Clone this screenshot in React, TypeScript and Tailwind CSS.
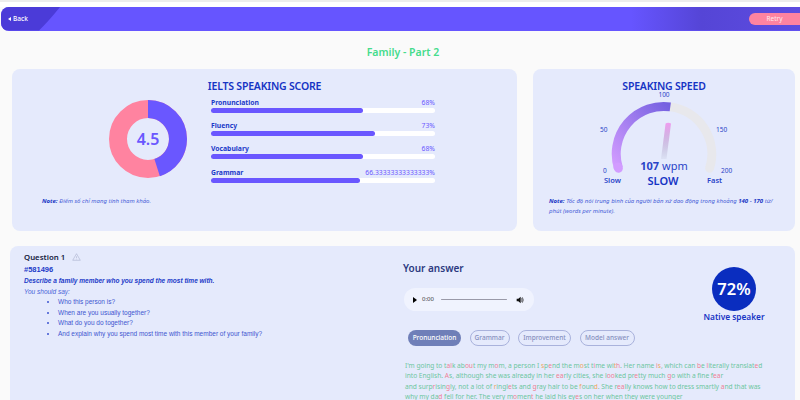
import { Fragment } from "react";

const scores = [
  { label: "Pronunciation", value: "68%", width: "w-[68%]" },
  { label: "Fluency", value: "73%", width: "w-[73%]" },
  { label: "Vocabulary", value: "68%", width: "w-[68%]" },
  { label: "Grammar", value: "66.33333333333333%", width: "w-[66.33%]" },
];

const tabs = [
  { label: "Grammar", width: "w-[40px]" },
  { label: "Improvement", width: "w-[53px]" },
  { label: "Model answer", width: "w-[55px]" },
];

const points = [
  "Who this person is?",
  "When are you usually together?",
  "What do you do together?",
  "And explain why you spend most time with this member of your family?",
];

// [x] = wrong sound, {x} = close sound
const answer = [
  "I'm going to t[al]k ab[ou]t my m[o]m, a person I {s}p[e]nd the m{o}st t[i]me wi{t}[h]. Her name [i]{s}, which can [b]e [l]iterally translat[e]d",
  "into English. [A]s, although she was already in her [ea]rly cities, she l[oo]ked pr[e]tty much [g]o with a fine f[ea]r",
  "and surp[r]isin[g]ly, not a lot of {r}ingl[e]ts and [g]ray hair to be {f}oun{d}. She r[ea]lly knows how to dress smartly [a]nd that was",
  "why my da[d] fell for her. The very m[o]men[t] he laid his ey[e]s on her when they were younger",
];

function Marked({ text }: { text: string }) {
  const parts = text.split(/(\[[^\]]+\]|\{[^}]+\})/);
  return (
    <>
      {parts.map((part, i) => {
        if (part.startsWith("["))
          return <span key={i} className="text-[#ee7f94]">{part.slice(1, -1)}</span>;
        if (part.startsWith("{"))
          return <span key={i} className="text-[#eda65c]">{part.slice(1, -1)}</span>;
        return <Fragment key={i}>{part}</Fragment>;
      })}
    </>
  );
}

function Donut() {
  return (
    <div className="relative ml-[67px] h-[78px] w-[78px]">
      <svg viewBox="0 0 78 78" className="h-full w-full">
        <circle cx="39" cy="39" r="30" fill="none" stroke="#ff83a0" strokeWidth="18" />
        <circle
          cx="39"
          cy="39"
          r="30"
          fill="none"
          stroke="#6a57ff"
          strokeWidth="18"
          strokeDasharray="84.8 188.5"
          transform="rotate(-90 39 39)"
        />
      </svg>
      <div className="absolute inset-0 flex items-center justify-center text-[16px] font-semibold text-[#6a57ff]">
        4.5
      </div>
    </div>
  );
}

function Gauge() {
  return (
    <div className="relative mx-auto h-[86px] w-[140px]">
      <svg viewBox="0 0 140 86" className="absolute inset-0 h-full w-full">
        <defs>
          <linearGradient id="speed" x1="0" y1="1" x2="1" y2="0">
            <stop offset="0" stopColor="#d29cff" />
            <stop offset="1" stopColor="#7460e0" />
          </linearGradient>
          <linearGradient id="needle" x1="0" y1="0" x2="0" y2="1">
            <stop offset="0" stopColor="#f09cf0" />
            <stop offset="1" stopColor="#8f8fb0" stopOpacity="0.1" />
          </linearGradient>
        </defs>
        <path
          d="M 76.3 5.9 A 47.5 47.5 0 0 1 115.6 67.2"
          fill="none"
          stroke="#e8e8ec"
          strokeWidth="9"
          strokeLinecap="round"
        />
        <path
          d="M 24.4 67.2 A 47.5 47.5 0 0 1 76.3 5.9"
          fill="none"
          stroke="url(#speed)"
          strokeWidth="9"
        />
        <path
          d="M 24.4 67.2 L 24 66"
          fill="none"
          stroke="#d29cff"
          strokeWidth="9"
          strokeLinecap="round"
        />
        <path
          d="M 71.6 22.5 Q 74 21 77 22.5 L 72.5 58 L 67 58 Z"
          fill="url(#needle)"
        />
      </svg>
      <span className="absolute left-[70px] top-[-11px] -translate-x-1/2 text-[6.5px] text-[#2a44c8]">100</span>
      <span className="absolute left-[6px] top-[24px] text-[6.5px] text-[#2a44c8]">50</span>
      <span className="absolute left-[122px] top-[24px] text-[6.5px] text-[#2a44c8]">150</span>
      <span className="absolute left-[9px] top-[65px] text-[6.5px] text-[#2a44c8]">0</span>
      <span className="absolute left-[127px] top-[65px] text-[6.5px] text-[#2a44c8]">200</span>
      <span className="absolute left-[10px] top-[74px] text-[7.5px] font-semibold text-[#2a44c8]">Slow</span>
      <span className="absolute left-[113px] top-[74px] text-[7.5px] font-semibold text-[#2a44c8]">Fast</span>
      <div className="absolute left-[70px] top-[57px] -translate-x-1/2 whitespace-nowrap text-[11px] leading-[16px] text-[#2a44c8]">
        <span className="font-bold">107</span> wpm
      </div>
      <div className="absolute left-[69px] top-[72px] -translate-x-1/2 text-[11px] font-semibold leading-[16px] text-[#1634c4]">
        SLOW
      </div>
    </div>
  );
}

export default function App() {
  return (
    <div className="h-[400px] overflow-hidden bg-[#fafafa] font-['Noto_Sans',sans-serif]">
      <div className="h-[2px] bg-[#ededed]" />
      <div className="h-[5px] bg-white" />
      <header className="relative ml-px flex h-[23.5px] items-center justify-between overflow-hidden rounded-l-[8px] bg-[#6655ff]">
        <svg viewBox="0 0 799 24" preserveAspectRatio="none" className="absolute inset-0 h-full w-full">
          <defs>
            <linearGradient id="headerRight" x1="0" y1="0" x2="1" y2="0">
              <stop offset="0" stopColor="#6655ff" />
              <stop offset="0.42" stopColor="#5545d6" />
              <stop offset="1" stopColor="#5d4ce0" />
            </linearGradient>
          </defs>
          <path d="M0 0 H59 Q48 14 38 24 H0 Z" fill="#4b3bd8" />
          <rect x="630" width="169" height="24" fill="url(#headerRight)" />
          <circle cx="776" cy="40" r="15" fill="#4b3bd0" />
        </svg>
        <button className="relative flex items-center gap-[2px] pl-[7px] text-[6.5px] font-medium text-white">
          <span className="h-0 w-0 border-y-[2.5px] border-r-[3px] border-y-transparent border-r-white" />
          Back
        </button>
        <button className="relative h-[12px] w-[51px] rounded-l-full bg-[#ff83a0] text-[6.5px] text-[#ffe9ee]">
          Retry
        </button>
      </header>

      <h1 className="mt-[13px] pl-[6px] text-center text-[10.5px] font-semibold leading-[16px] text-[#45dc8c]">
        Family - Part 2
      </h1>

      <div className="mt-[9px] flex gap-[16px] pl-[12px] pr-[5px]">
        <section className="flex h-[162px] w-[505px] flex-col rounded-[8px] bg-[#e5eafc] pl-[30px] pt-[9px]">
          <h2 className="-ml-[30px] text-center text-[10.5px] font-semibold leading-[16px] tracking-[-0.2px] text-[#1634c4]">
            IELTS SPEAKING SCORE
          </h2>
          <div className="mt-[4.5px] flex">
            <div className="w-[169px] pt-[2px]">
              <Donut />
              <p className="mt-[19px] text-[6px] italic leading-[8px] text-[#4a62d8]">
                <b className="text-[#1634c4]">Note:</b> Điểm số chỉ mang tính tham khảo.
              </p>
            </div>
            <div className="flex w-[224px] flex-col gap-[8.2px]">
              {scores.map((s) => (
                <div key={s.label}>
                  <div className="flex items-end justify-between text-[6.8px] leading-[10px]">
                    <span className="font-bold text-[#1c3ac8]">{s.label}</span>
                    <span className="text-[#6a57ff]">{s.value}</span>
                  </div>
                  <div className="h-[5px] rounded-full bg-white">
                    <div className={`h-full rounded-full bg-[#6a57ff] ${s.width}`} />
                  </div>
                </div>
              ))}
            </div>
          </div>
        </section>

        <section className="h-[162px] flex-1 rounded-[8px] bg-[#e5eafc] pt-[9px]">
          <h2 className="text-center text-[10.5px] font-semibold leading-[16px] tracking-[-0.2px] text-[#1634c4]">
            SPEAKING SPEED
          </h2>
          <div className="mt-[7px]">
            <Gauge />
          </div>
          <p className="mt-[9px] px-[16px] text-[6px] italic leading-[10px] text-[#4a62d8]">
            <b className="text-[#1634c4]">Note:</b> Tốc độ nói trung bình của người bản xứ dao động trong khoảng{" "}
            <b className="text-[#1634c4]">140 - 170</b> từ/ phút (words per minute).
          </p>
        </section>
      </div>

      <section className="ml-[10px] mr-[5px] mt-[15px] flex h-[200px] rounded-[8px] bg-[#e5eafc]">
        <div className="w-[393px] shrink-0 pl-[14px] pt-[5px] font-['Liberation_Sans',sans-serif]">
          <div className="flex items-center gap-[7px] font-['Noto_Sans',sans-serif] text-[7.8px] font-semibold leading-[12px] text-[#141a3c]">
            Question 1
            <svg viewBox="0 0 12 11" className="h-[8px] w-[9px]" fill="none" stroke="#a9b0cc" strokeWidth="0.8">
              <path d="M6 1 L11.2 10 H0.8 Z" />
              <path d="M6 4.5 V7 M6 8 V8.7" />
            </svg>
          </div>
          <p className="mt-[2px] text-[7.5px] font-bold leading-[10.5px] text-[#1c3ac8]">#581496</p>
          <p className="mt-[1px] text-[6.5px] font-bold italic leading-[10.5px] text-[#1c3ac8]">
            Describe a family member who you spend the most time with.
          </p>
          <p className="text-[6.5px] italic leading-[10.5px] text-[#4a62d8]">You should say:</p>
          <ul className="list-disc pl-[34px] text-[6.5px] leading-[10.5px] text-[#3d55d0]">
            {points.map((p) => (
              <li key={p}>{p}</li>
            ))}
          </ul>
        </div>

        <div className="min-w-0 flex-1 pt-[14px]">
          <div className="flex">
            <div className="w-[286px]">
              <h3 className="text-[10px] font-semibold leading-[16px] text-[#2c3a80]">Your answer</h3>
              <div className="ml-[1px] mt-[12.5px] flex h-[23px] w-[130px] items-center rounded-full bg-[#f0f3fe] pl-[9px] pr-[7px]">
                <span className="h-0 w-0 border-y-[3px] border-l-[4.5px] border-y-transparent border-l-black" />
                <span className="ml-[5px] text-[6px] text-[#3a3a3a]">0:00</span>
                <span className="ml-[7px] h-[1px] w-[66px] rounded-full bg-[#9a9aa8]" />
                <svg viewBox="0 0 12 12" className="ml-[9px] h-[8px] w-[8px]" fill="#111">
                  <path d="M1 4 H3.5 L7 1 V11 L3.5 8 H1 Z" />
                  <path d="M8.2 3.5 Q10 6 8.2 8.5" fill="none" stroke="#111" strokeWidth="1" />
                  <path d="M9.5 2 Q12.2 6 9.5 10" fill="none" stroke="#111" strokeWidth="1" />
                </svg>
              </div>
            </div>
            <div className="mt-[7.5px] flex w-[90px] flex-col items-center">
              <div className="flex h-[44px] w-[44px] items-center justify-center rounded-full bg-[#0a2dbf] text-[16.5px] font-semibold text-white">
                72%
              </div>
              <p className="-mt-[1px] whitespace-nowrap text-[8.3px] font-semibold leading-[14px] text-[#1634c4]">
                Native speaker
              </p>
            </div>
          </div>

          <div className="ml-[5px] mt-[5.5px] flex gap-[8.5px] text-[6.5px] font-medium">
            <button className="h-[16px] w-[53px] rounded-full bg-[#6f7fb8] text-white">Pronunciation</button>
            {tabs.map((t) => (
              <button
                key={t.label}
                className={`h-[16px] whitespace-nowrap rounded-full border border-[#a9b2dc] text-[#8590be] ${t.width}`}
              >
                {t.label}
              </button>
            ))}
          </div>

          <div className="ml-[2px] mt-[15px] whitespace-nowrap text-[6.6px] leading-[10.6px] text-[#6cc6a0]">
            {answer.map((line) => (
              <p key={line}>
                <Marked text={line} />
              </p>
            ))}
          </div>
        </div>
      </section>
    </div>
  );
}
